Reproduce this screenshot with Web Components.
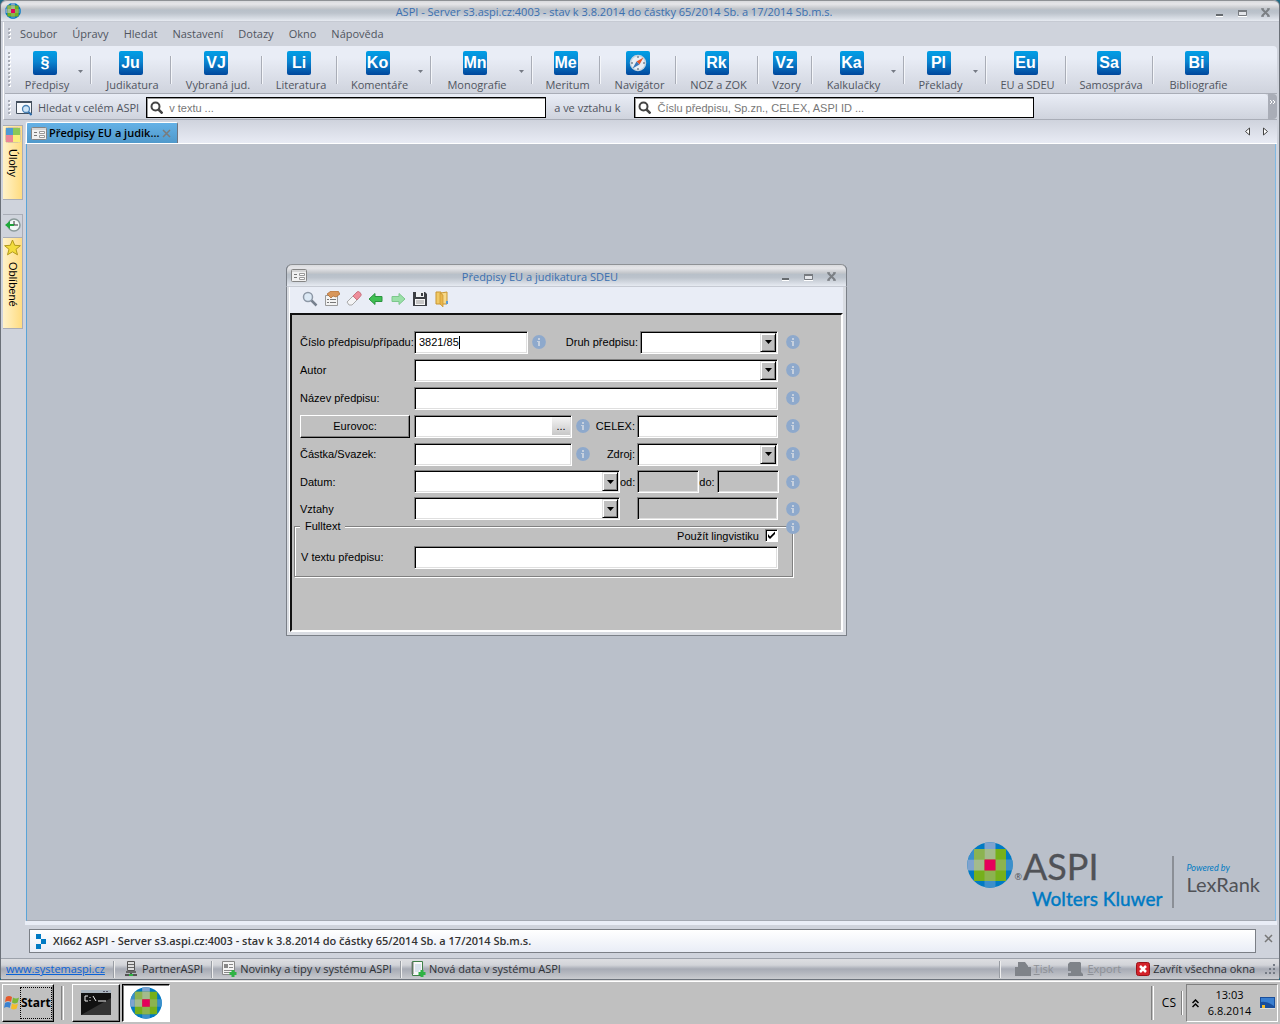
<!DOCTYPE html>
<html lang="cs">
<head>
<meta charset="utf-8">
<title>ASPI</title>
<style>
html,body{height:100%;margin:0}
body{background:#1f6b86;font:11px/14px "Open Sans","Noto Sans",sans-serif;color:#50555f;overflow:hidden}
</style>
</head>
<body>
<aspi-desktop></aspi-desktop>
<script>
const define=(name,html)=>customElements.define(name,class extends HTMLElement{
  connectedCallback(){
    if(this.shadowRoot)return;
    const t=document.createElement('template');
    t.innerHTML=typeof html==='function'?html(this):html;
    this.attachShadow({mode:'open'}).appendChild(t.content.cloneNode(true));
  }
});
const base=`:host,*{box-sizing:border-box}button{font:inherit;color:inherit;background:none;border:0;padding:0;margin:0}svg{display:block}`;

define('info-dot',`<style>:host{display:block;width:14px;height:14px;flex:none}svg{display:block}</style>
<svg width="14" height="14" viewBox="0 0 14 14"><circle cx="7" cy="7" r="6.9" fill="#8ea9cc"/><path d="M6 3h2v2H6zM5 6h3v5H6V7H5z" fill="#c6d0de"/></svg>`);

define('aspi-globe',el=>{const s=el.getAttribute('size')||16;return `<style>:host{display:block;width:${s}px;height:${s}px;flex:none}svg{display:block}</style>
<svg width="${s}" height="${s}" viewBox="0 0 46 46"><defs><clipPath id="c"><circle cx="23" cy="23" r="22.7"/></clipPath></defs>
<g clip-path="url(#c)"><path fill="#007ac3" d="M0 0h46v46H0z"/><path fill="#3c8fcb" d="M0 7h7v10.500H0zM39 17.500h7v11h-7zM17.500 39h11v7h-11z"/><path fill="#7fa3cf" d="M0 17.500h7v11H0zM17.500 0h11v7h-11z"/>
<path fill="#76b01b" d="M7 7h32v32H7z"/><path fill="#8cb350" d="M7 7h10.500v10.500H7zM28.500 17.500H39v11H28.500zM17.500 28.500h11V39h-11z"/><path fill="#a3bb8d" d="M7 17.500h10.500v11H7zM17.500 7h11v10.500h-11z"/><path fill="#e5005b" d="M17.500 17.500h11v11h-11z"/></g></svg>`});

define('form-glyph',`<style>:host{display:block;width:16px;height:13px;flex:none}svg{display:block}</style>
<svg width="16" height="13" viewBox="0 0 16 13"><rect x=".5" y=".5" width="15" height="12" rx="1" fill="#f1f1f1" stroke="#858585"/><path d="M1 1h14v2H1z" fill="#d6d6d6"/><path d="M3 5h3v1H3zM3 8h3v1H3z" fill="#777"/><path d="M8.500 4.500h5v2h-5zM8.500 8.500h5v2h-5z" fill="#fff" stroke="#999"/></svg>`);

define('window-controls',`<style>${base}:host{display:flex;gap:14px;flex:none;padding-top:2px}button{width:9px;height:9px}</style>
<button aria-label="Minimalizovat"><svg width="9" height="9"><path d="M1 6h7v2H1z" fill="#666b70"/><path d="M1 8h7v1H1z" fill="#fff"/></svg></button>
<button aria-label="Maximalizovat"><svg width="9" height="9"><path d="M.5 2.500h8v5h-8z" fill="#e4e6ea" stroke="#777b80"/><path d="M0 2h9v2H0z" fill="#777b80"/><path d="M0 8h9v1H0z" fill="#fff"/></svg></button>
<button aria-label="Zavřít"><svg width="9" height="9"><path d="M1 1l7 7M8 1L1 8" stroke="#7b7f84" stroke-width="2"/><path d="M0 .8h3M6 .8h3M0 8.200h3M6 8.200h3" stroke="#7b7f84"/></svg></button>`);

define('title-bar',`<style>:host{display:flex;align-items:center;height:22px;padding:0 9px 0 4px;box-sizing:border-box;border-top:1px solid #8e9195;border-bottom:1px solid #c6cad3;border-radius:6px 6px 0 0;color:#3a6fb0;background:linear-gradient(#d9dadd,#e6e6e9 15%,#c3c6cb 38%,#b8c0c9 45%,#bcc3cc 60%,#e6eaf1)}
b{flex:1;font-weight:400;text-align:center;white-space:nowrap;padding-right:8px;padding-top:2px}</style><slot name="icon"></slot><b><slot></slot></b><window-controls></window-controls>`);

define('grip-dots',el=>{const n=+el.getAttribute('dots');let c='';for(let i=0;i<n;i++)c+=`<path d="M1 ${i*4+1}h2v2H1z" fill="#fff"/><path d="M0 ${i*4}h2v2H0z" fill="#a9adb7"/>`;
return `<style>:host{display:block;width:3px;flex:none}svg{display:block}</style><svg width="3" height="${n*4}">${c}</svg>`});

define('menu-bar',`<style>${base}:host{display:flex;align-items:center;height:24px;padding-left:4px;background:#cfd3dc}nav{display:flex;gap:15px;padding-left:9px}</style>
<grip-dots dots="3"></grip-dots><nav><button>Soubor</button><button>Úpravy</button><button>Hledat</button><button>Nastavení</button><button>Dotazy</button><button>Okno</button><button>Nápověda</button></nav>`);

define('tool-item',el=>`<style>${base}:host{display:flex;flex:none;width:var(--w);padding-top:5px}
.go{flex:1;display:flex;flex-direction:column;align-items:center;gap:3px;white-space:nowrap;padding-left:3px}
.t{width:24px;height:24px;margin-right:4px;border-radius:2px;background:linear-gradient(#009fe6,#0a84d0 45%,#00479c);color:#fff;font:bold 16px/23px "Liberation Sans",sans-serif;text-align:center}
.m{width:12px;padding-top:19px}.s{width:2px;height:28px;margin-top:5px;background:#a9adb7;border-right:1px solid #f4f6fa}</style>
<button class="go"><span class="t">${el.hasAttribute('compass')?`<svg width="24" height="24"><circle cx="12" cy="12" r="7.500" fill="#e8eef4" stroke="#c5d3de" stroke-width="1.500"/><path d="M12 5v2M12 17v2M5 12h2M17 12h2" stroke="#456"/><path d="M17.500 6.500l-4 7-3-3z" fill="#e4572e"/><path d="M6.500 17.500l4-7 3 3z" fill="#3b78b8"/></svg>`:el.getAttribute('mark')}</span><span><slot></slot></span></button>
${el.hasAttribute('menu')?'<span class="m"><svg width="5" height="3"><path d="M0 0h5L2.500 3z" fill="#757a84"/></svg></span>':''}${el.hasAttribute('last')?'':'<span class="s"></span>'}`);

define('tool-bar',()=>{
const items=[['§','Předpisy',79,'menu'],['Ju','Judikatura',80],['VJ','Vybraná jud.',91],['Li','Literatura',75],['Ko','Komentáře',94,'menu'],['Mn','Monografie',101,'menu'],['Me','Meritum',68],['','Navigátor',76,'compass'],['Rk','NOZ a ZOK',82],['Vz','Vzory',54],['Ka','Kalkulačky',92,'menu'],['Pl','Překlady',82,'menu'],['Eu','EU a SDEU',80],['Sa','Samospráva',87],['Bi','Bibliografie',86,'last']];
return `<style>:host{display:flex;height:48px;padding-left:3px;box-sizing:border-box;border-bottom:1px solid #a9adb7;border-radius:0 4px 0 0;background:linear-gradient(#e9edf6 25%,#cfd3dd)}grip-dots{margin:6px 2px 0 0}</style><grip-dots dots="9"></grip-dots>`+
items.map(([m,l,w,f=''])=>`<tool-item mark="${m}" ${f} style="--w:${w}px">${l}</tool-item>`).join('')});

define('search-bar',`<style>${base}:host{display:flex;height:25px}
.bar{flex:1;display:flex;align-items:center;padding:2px 0 0 3px;border-radius:0 4px 4px 0;background:linear-gradient(#e9edf6,#cfd3dd)}
.ic{margin:0 6px 0 5px}.f{display:flex;align-items:center;width:400px;height:21px;border:1px solid #000;box-shadow:inset 1px 1px #999;background:#fff;padding-left:3px;gap:6px}
input{flex:1;border:0;outline:0;background:none;padding:0;font:11px/14px "Liberation Sans",sans-serif}input::placeholder{color:#777;opacity:1}
.a{margin-left:7px}.b{margin:0 14px 0 8px}.more{width:9px;background:#a9adb7;border-radius:0 4px 4px 0;color:#fff}</style>
<div class="bar"><grip-dots dots="4"></grip-dots>
<svg class="ic" width="16" height="16"><path d="M.5 1.500h15v12H.5z" fill="#f7f9fc" stroke="#44505e"/><path d="M0 1h16v2H0z" fill="#44505e"/><circle cx="10" cy="9" r="3.500" fill="#cfe5f7" stroke="#4a82b5" stroke-width="1.300"/><path d="M12.500 12l3 3" stroke="#2f6ca8" stroke-width="2"/></svg>
<label for="q">Hledat v celém ASPI</label><span class="f a"><svg width="13" height="13"><circle cx="5.500" cy="5.500" r="4" fill="none" stroke="#444" stroke-width="2"/><path d="M8.500 8.500l4 4" stroke="#444" stroke-width="2.500"/></svg><input id="q" placeholder="v textu ..."></span>
<label class="b" for="r">a ve vztahu k</label><span class="f"><svg width="13" height="13"><circle cx="5.500" cy="5.500" r="4" fill="none" stroke="#444" stroke-width="2"/><path d="M8.500 8.500l4 4" stroke="#444" stroke-width="2.500"/></svg><input id="r" placeholder="Číslu předpisu, Sp.zn., CELEX, ASPI ID ..."></span></div>
<button class="more" aria-label="Další"><svg width="9" height="25"><path d="M2 6l2 2-2 2M5 6l2 2-2 2" fill="none" stroke="#fff"/></svg></button>`);

define('side-rail',`<style>${base}:host{display:flex;flex-direction:column;width:22px;flex:none;padding-top:5px}
button{display:flex;flex-direction:column;align-items:center;width:20px;border:1px solid #a9adb7;border-left:0;padding-top:1px;gap:6px;font:11px/13px "Liberation Sans",sans-serif;color:#000;white-space:nowrap}
.y{background:linear-gradient(90deg,#fff2c9,#ffdc80)}span{writing-mode:vertical-rl}.u{height:75px}.h{height:23px;margin-top:14px;border-bottom:0;padding-top:2px}.o{height:92px}</style>
<button class="y u"><svg width="16" height="16"><rect x=".5" y=".5" width="15" height="15" rx="2" fill="#fff" stroke="#d8c9a0"/><path d="M1 1h7v7H1z" fill="#4e9ad4"/><path d="M8 1h7v7H8z" fill="#8cc857"/><path d="M1 8h7v7H1z" fill="#ea8698"/><path d="M8 8h7v7H8z" fill="#fbee7a"/></svg><span>Úlohy</span></button>
<button class="h" aria-label="Historie"><svg width="16" height="16"><circle cx="9" cy="8" r="6" fill="#f3f7f7" stroke="#8a9a9a" stroke-width="1.500"/><path d="M9 4v4h4" fill="none" stroke="#333"/><path d="M9 8H4" stroke="#1f9f3a" stroke-width="2"/><path d="M0 8l5-4v8z" fill="#1fa83a"/></svg></button>
<button class="y o"><svg width="17" height="17" viewBox="0 0 17 17"><path d="M8.500 1l2.200 5.300 5.700.4-4.400 3.600 1.500 5.500-5-3-5 3L5 10.300.6 6.700l5.700-.4z" fill="#f3dc3c" stroke="#b39a1c"/></svg><span>Oblíbené</span></button>`);

define('doc-tabs',`<style>${base}:host{display:flex;height:24px;border-bottom:1px solid #fff;background:linear-gradient(#cfd3dd,#e8ebf4);padding-right:8px;align-items:flex-end}
.tab{display:flex;align-items:center;width:152px;height:21px;margin-left:1px;padding-left:4px;gap:2px;border:1px solid #fff;border-right:1px solid #6f7580;border-bottom:0;border-radius:2px 2px 0 0;background:linear-gradient(#64b1e6,#5099cb);color:#000;font-weight:600;white-space:nowrap}
.x{margin-left:1px}.n{margin-left:auto;display:flex;gap:11px;padding-bottom:7px}</style>
<div class="tab"><form-glyph></form-glyph><span>Předpisy EU a judik...</span><button class="x" aria-label="Zavřít kartu"><svg width="9" height="9"><path d="M1 1l7 7M8 1L1 8" stroke="#7b7b7b" stroke-width="1.500"/></svg></button></div>
<div class="n"><button aria-label="Předchozí"><svg width="7" height="9"><path d="M5.500 1v7L1.500 4.500z" fill="#fff" stroke="#444"/></svg></button><button aria-label="Následující"><svg width="7" height="9"><path d="M1.500 1v7l4-3.500z" fill="#fff" stroke="#444"/></svg></button></div>`);

define('logo-mark',`<style>:host{position:absolute;right:15px;bottom:10px;display:flex;align-items:flex-start;font-family:Lato,"Open Sans",sans-serif;color:#505257;white-space:nowrap}
.w{display:flex;flex-direction:column;margin-left:-5px}.r{font:9px/14px "Open Sans",sans-serif;padding:28px 0 0 1px}.a{font-size:36px;line-height:44px;padding:2px 0 0 6px;-webkit-text-stroke:.3px #505257}.k{font-size:19px;line-height:22px;color:#007ac3;font-weight:500;padding-left:15px;-webkit-text-stroke:.3px #007ac3}
.l{align-self:flex-end;width:2px;height:52px;background:#8b8f96;margin:0 13px 2px 9px}.x{padding-top:20px}.p{font:italic 9px/12px Lato,sans-serif;color:#007ac3}.n{font-size:20px;line-height:20px}</style>
<aspi-globe size="46"></aspi-globe><span class="r">®</span><div class="w"><span class="a">ASPI</span><span class="k">Wolters Kluwer</span></div><span class="l"></span><div class="x"><div class="p">Powered by</div><div class="n">LexRank</div></div>`);

define('dialog-tools',`<style>${base}:host{display:flex;align-items:center;gap:6px;height:26px;padding:0 0 3px 12px;background:#e9edf6}</style>
<button aria-label="Hledat"><svg width="16" height="16"><circle cx="6" cy="6" r="4.500" fill="#dce9f5" stroke="#8d98a6" stroke-width="1.500"/><path d="M9.500 9.500l5 5" stroke="#77818e" stroke-width="2.500"/></svg></button>
<button aria-label="Vlastnosti"><svg width="16" height="16"><path d="M1.500 4.500h12v10h-12z" fill="#f3f3f3" stroke="#999"/><path d="M3 8h2v1H3zM6 8h6v1H6zM3 11h2v1H3zM6 11h6v1H6z" fill="#777"/><path d="M3 3l4-3h7l2 3-4 3-3-1-2 2-2-2z" fill="#d8965a" stroke="#a8642c" stroke-width=".7"/></svg></button>
<button aria-label="Vymazat"><svg width="16" height="16"><path d="M1 11l6-6 4 4-5 5H3z" fill="#f4f4f6" stroke="#aaa"/><path d="M7 5l4-4q1-1 2.500 0l1.500 2q.6 1-.4 2L11 9z" fill="#ee8d9a" stroke="#c97480"/></svg></button>
<button aria-label="Zpět"><svg width="16" height="16"><path d="M1 8l6-5.500v3h7v5H7v3z" fill="#3fbf52" stroke="#2c9440"/></svg></button>
<button aria-label="Vpřed"><svg width="16" height="16"><path d="M15 8L9 2.500v3H2v5h7v3z" fill="#9be0a8" stroke="#7cc78c"/></svg></button>
<button aria-label="Uložit"><svg width="16" height="16"><path d="M1 1h12l2 2v12H1z" fill="#3c3f44"/><path d="M4 1h8v5H4z" fill="#eef0f2"/><path d="M9 2h2v3H9z" fill="#3c3f44"/><path d="M3 8h10v6H3z" fill="#f7f7f7"/><path d="M4 10h8M4 12h8" stroke="#999"/></svg></button>
<button aria-label="Otevřít"><svg width="16" height="16"><path d="M2 1h5v12H2z" fill="#f1c964" stroke="#c89530"/><path d="M7 2l6-1v12H7z" fill="#f7d98a" stroke="#c89530"/><path d="M6 2l3 2v12l-3-3z" fill="#eab54a" stroke="#c89530" stroke-width=".7"/><path d="M12 10h2v3h-2z" fill="#5b9bd5"/></svg></button>`);

define('search-form',()=>{
const sel=(id,c)=>`<span class="sel ${c}"><select id="${id}"><option></option></select><i><svg width="7" height="4"><path d="M0 0h7L3.500 4z"/></svg></i></span>`;
return `<style>${base}:host{display:block;flex:1;padding:13px 0 0 1px;border:2px solid;border-color:#111 #fff #fff #111;background:#c0c0c0;font:11px/14px "Liberation Sans",sans-serif;color:#000}
form{display:grid;grid-template-rows:repeat(5,28px) repeat(2,27px)}
.row,.main{display:flex;align-items:center}.row{padding-left:7px}.row>label:first-child{width:114px;flex:none;white-space:nowrap}.main{width:364px;flex:none;margin-right:8px}
input:not([type=checkbox]),.sel{height:23px;border:1px solid;border-color:#808080 #fff #fff #808080;outline:0;background:#fff;box-shadow:inset 1px 1px #000,inset -1px -1px #dfdfdf;padding:0 4px;font:inherit;color:#000;min-width:0;border-radius:0}
input:disabled{background:#c0c0c0!important}
.sel{display:grid;padding:1px;grid-template:1fr/1fr}.sel select{grid-area:1/1;appearance:none;border:0;outline:0;background:none;width:100%;font:inherit;padding:0}
.sel i{grid-area:1/1;justify-self:end;width:16px;display:grid;place-items:center;pointer-events:none;background:#c0c0c0;border:1px solid;border-color:#dfdfdf #000 #000 #dfdfdf;box-shadow:inset 1px 1px #fff,inset -1px -1px #808080}
.w1,.w2,.w4,.w5,.w6,.w7{flex:none}.w1{width:114px}.w2{width:138px}.wf{flex:1}.w4{width:158px}.w5{width:141px}.w6{width:206px}.w7{width:62px}
.g{margin:0 4px}.e{flex:1;text-align:right;padding-right:2px;white-space:nowrap}
.euro{width:110px;height:23px;margin-right:4px;border:1px solid;border-color:#fff #000 #000 #fff;box-shadow:inset -1px -1px #808080;text-align:center}
.combo{display:grid;grid-template:1fr/1fr;align-items:center}.combo>*{grid-area:1/1}.combo button{justify-self:end;width:18px;height:18px;margin-right:2px;background:linear-gradient(#f4f4f4,#c8c8c8)}
.combo u{width:1px;height:13px;background:#000;margin-left:45px}
fieldset{position:relative;width:499px;height:55px;margin:0 0 0 1px;padding:0 0 0 6px;border:1px solid #808080;box-shadow:1px 1px #fff,inset 1px 1px #fff;min-width:0}
legend{padding:0 5px;margin-left:-1px;line-height:8px;background:#c0c0c0}
fieldset info-dot{position:absolute;right:-8px;top:-10px}
.chk{display:flex;justify-content:flex-end;align-items:center;gap:6px;width:477px;height:11px}
.chk input{appearance:none;margin:0;width:13px;height:13px;background:#fff;border:1px solid;border-color:#808080 #fff #fff #808080;box-shadow:inset 1px 1px #000}
.chk .box{display:grid}.chk .box>*{grid-area:1/1}.chk svg{pointer-events:none}
.ft{display:flex;align-items:center;height:32px}.ft label{width:113px}.ft input{width:364px}
</style>
<form>
<div class="row"><label for="a">Číslo předpisu/případu:</label><div class="main"><span class="combo w1"><input id="a" value="3821/85"><u></u></span><info-dot class="g"></info-dot><label class="e" for="b">Druh předpisu:</label>${sel('b','w2')}</div><info-dot></info-dot></div>
<div class="row"><label for="c">Autor</label><div class="main">${sel('c','wf')}</div><info-dot></info-dot></div>
<div class="row"><label for="d">Název předpisu:</label><div class="main"><input class="wf" id="d"></div><info-dot></info-dot></div>
<div class="row"><button class="euro" type="button">Eurovoc:</button><div class="main"><span class="combo w4"><input id="e" aria-label="Eurovoc"><button type="button">...</button></span><info-dot class="g"></info-dot><label class="e" for="f">CELEX:</label><input class="w5" id="f"></div><info-dot></info-dot></div>
<div class="row"><label for="g">Částka/Svazek:</label><div class="main"><input class="w4" id="g"><info-dot class="g"></info-dot><label class="e" for="h">Zdroj:</label>${sel('h','w5')}</div><info-dot></info-dot></div>
<div class="row"><label for="i">Datum:</label><div class="main">${sel('i','w6')}<label class="e" for="j">od:</label><input class="w7" id="j" disabled><label class="e" for="k">do:</label><input class="w7" id="k" disabled></div><info-dot></info-dot></div>
<div class="row"><label for="l">Vztahy</label><div class="main">${sel('l','w6')}<span class="e"></span><input class="w5" aria-label="Hodnota vztahu" disabled></div><info-dot></info-dot></div>
<fieldset><legend>Fulltext</legend><info-dot></info-dot>
<div class="chk"><label for="m">Použít lingvistiku</label><span class="box"><input id="m" type="checkbox" checked><svg width="13" height="13"><path d="M3 5v3l2 2 5-5V2.500L5 7.500z"/></svg></span></div>
<div class="ft"><label for="n">V textu předpisu:</label><input id="n"></div></fieldset>
</form>`});

define('mdi-window',`<style>:host{position:absolute;left:259px;top:120px;width:561px;height:372px;box-sizing:border-box;display:flex;flex-direction:column;border:1px solid #7b8088;border-top:0;border-radius:6px 6px 0 0;background:#d9dce2}
.in{flex:1;display:flex;flex-direction:column;margin:0 3px 3px 2px;border-left:1px solid #fff}title-bar{margin:0 -1px;height:23px;border-left:1px solid #7b8088;border-right:1px solid #7b8088;padding-left:4px;padding-right:10px}</style>
<title-bar><form-glyph slot="icon"></form-glyph>Předpisy EU a judikatura SDEU</title-bar><div class="in"><dialog-tools></dialog-tools><search-form></search-form></div>`);

define('message-line',`<style>${base}:host{display:flex;align-items:center;padding:4px 4px 5px 4px}
div{flex:1;display:flex;align-items:center;gap:6px;height:24px;padding-left:6px;border:1px solid #7b7f86;background:linear-gradient(#fff,#e9edf6);font-weight:600;color:#333}
button{margin:0 0 6px 8px}</style><div><svg width="11" height="15"><path d="M0 0h5v5H0zM5 5h5v5H5zM0 10h5v5H0z" fill="#007ac3"/></svg><span>XI662 ASPI - Server s3.aspi.cz:4003 - stav k 3.8.2014 do částky 65/2014 Sb. a 17/2014 Sb.m.s.</span></div><button aria-label="Zavřít"><svg width="9" height="9"><path d="M1 1l7 7M8 1L1 8" stroke="#777" stroke-width="1.500"/></svg></button>`);

define('status-bar',`<style>${base}:host{display:flex;align-items:center;height:22px;padding:0 2px 0 5px;border-top:1px solid #9da2ab;border-bottom:1px solid #6d737c;background:linear-gradient(#dddee2,#d2d4d9 30%,#a7abb5 50%,#b1b4bc 65%,#c9cbcf);color:#2e3136;white-space:nowrap}
a{color:#0b62d6}button{display:flex;align-items:center;gap:3px}.s{width:2px;height:17px;background:#999da4;border-right:1px solid #eee;margin:0 8px}.r{margin-left:auto;margin-right:14px}.d{color:#8d9096;margin-right:15px}u{text-underline-offset:1px}</style>
<a href="#">www.systemaspi.cz</a><span class="s"></span>
<button><svg width="16" height="16"><path d="M4.500.5h7v9h-7z" fill="#ddd" stroke="#555"/><path d="M5 3h6v1H5zM5 6h6v1H5z" fill="#666"/><path d="M3 10h10v2H3z" fill="#666"/><path d="M2 14h12M8 12v2" stroke="#555" stroke-width="2"/><path d="M6 13h4v2H6z" fill="#2fb244"/></svg>PartnerASPI</button><span class="s"></span>
<button><svg width="16" height="16"><path d="M1.500.5h12v13h-12z" fill="#f4f4f4" stroke="#888"/><path d="M3 3h4v4H3zM8 3h4v1H8zM8 6h4v1H8zM3 9h8v1H3zM3 11h6v1H3z" fill="#888"/><path d="M12 9v7M8.500 12.500h7" stroke="#2fb244" stroke-width="3"/></svg>Novinky a tipy v systému ASPI</button><span class="s"></span>
<button><svg width="16" height="16"><path d="M2.500.5h10v14h-10z" fill="#f8f8f8" stroke="#3f8048"/><path d="M1 2h3M1 4h3M1 6h3M1 8h3M1 10h3M1 12h3" stroke="#777"/><path d="M5 4h6M5 6h6M5 8h6M5 10h4" stroke="#b9cde0"/><path d="M12 9v7M8.500 12.500h7" stroke="#2fb244" stroke-width="3"/></svg>Nová data v systému ASPI</button>
<span class="s r"></span><button class="d" disabled><svg width="16" height="16"><path d="M3 1h7l3 4v1h3v9H0V6h3z" fill="#7f8389"/></svg><span><u>T</u>isk</span></button>
<button class="d" disabled><svg width="16" height="16"><path d="M2 1h10l1 1v9l2 2v2H0v-3h3v-2H0V3z" fill="#7f8389"/></svg><span><u>E</u>xport</span></button>
<button><svg width="14" height="14"><rect x=".5" y=".5" width="13" height="13" rx="2" fill="#d3222a" stroke="#9a1218"/><path d="M4 4l6 6M10 4l-6 6" stroke="#fff" stroke-width="2.500"/></svg>Zavřít všechna okna</button>
<svg width="22" height="14"><path d="M18 2h2v2h-2zM14 6h2v2h-2zM18 6h2v2h-2zM10 10h2v2h-2zM14 10h2v2h-2zM18 10h2v2h-2z" fill="#747a84"/></svg>`);

define('task-bar',`<style>${base}:host{display:flex;align-items:center;height:44px;flex:none;padding:1px 2px 0;border-top:1px solid #dfdfdf;box-shadow:inset 0 1px #fff;background:#c0c0c0;color:#000}
.b{display:flex;align-items:center;justify-content:center;height:38px;width:48px;border:1px solid;border-color:#fff #000 #000 #fff;box-shadow:inset -1px -1px #808080}
.st{width:52px;justify-content:flex-start;padding-left:1px}.st span{font:bold 12px/30px "Open Sans",sans-serif;border:1px dotted #000;height:32px}
.on{border-color:#000 #fff #fff #000;background:#fff;box-shadow:inset 1px 1px #808080;margin-left:2px}
.s{width:3px;height:34px;border-left:1px solid #808080;border-right:1px solid #fff}.sm{height:24px;width:2px}
.l{margin:0 8px 0 7px}.r{margin-left:auto}.cs{font:12px/14px "Open Sans",sans-serif;margin:0 5px 0 8px}
.tray{display:flex;align-items:center;width:92px;height:38px;margin-left:3px;border:1px solid;border-color:#808080 #fff #fff #808080;padding:0 2px 0 5px;justify-content:space-between}
.c{font-size:11px;line-height:16px;text-align:center;white-space:pre-line}</style>
<button class="b st"><svg width="16" height="16" viewBox="0 0 16 16"><path d="M2 2q3-2 6 0L7 7Q4 5 1 7z" fill="#e5592b"/><path d="M9 2.500q3 2 6 0l-1.300 5q-3 2-5.700 0z" fill="#7ab83a"/><path d="M1 8q3-2 6 0l-1.300 5q-3-2-5.700 0z" fill="#3b82d0"/><path d="M8 8.500q3 2 6 0l-1.300 5q-3 2-5.700 0z" fill="#f4bd2b"/></svg><span>Start</span></button>
<span class="s l"></span>
<button class="b" aria-label="Příkazový řádek"><svg width="30" height="26"><path d="M0 0h30v25H0z" fill="#111"/><path d="M0 0h30v3H0z" fill="#a9b4be"/><path d="M22 1h2v1h-2zM25 1h2v1h-2z" fill="#556"/><path d="M0 25L30 8v17z" fill="#333"/><path d="M7 6H4v5h3M9 7v1M9 10v1M12 6l3 5M17 11h8" fill="none" stroke="#eee"/></svg></button>
<button class="b on" aria-label="ASPI"><aspi-globe size="32"></aspi-globe></button>
<span class="s r"></span><span class="cs">CS</span><span class="s sm"></span>
<div class="tray"><svg width="7" height="9"><path d="M.5 4l3-3 3 3M.5 8l3-3 3 3" fill="none" stroke="#000" stroke-width="1.500"/></svg><span class="c">13:03
6.8.2014</span><svg width="15" height="13"><path d="M0 0h15v11H0z" fill="#1a4f9c"/><path d="M1 1h13v8Q8 4 1 5z" fill="#3a7fd0"/><path d="M2 8h3v4H2z" fill="#f4bd2b"/><path d="M0 11h15v1H0z" fill="#ddd"/></svg></div>`);

define('aspi-desktop',`<style>:host{display:flex;flex-direction:column;height:100vh}
.app{flex:1;display:flex;flex-direction:column;min-height:0;background:#cfd3dc;border-radius:6px 6px 4px 4px;border-left:1px solid #6b7078;border-right:1px solid #6b7078}
.body{flex:1;display:flex;min-height:0;margin:0 2px}.work{flex:1;display:flex;flex-direction:column;min-width:0}
.canvas{flex:1;position:relative;min-height:0;background:#bac0ca;border-left:1px solid #5aa4d8;border-right:1px solid #7fb9e4;border-bottom:1px solid #a4a9b2;margin:0 1px}
.edge{height:4px;background:#e9edf6;flex:none}.top{margin:0 2px;border-left:1px solid #fff;border-bottom:1px solid #a9adb7}tool-bar,search-bar{margin-left:1px}</style>
<div class="app"><title-bar><aspi-globe slot="icon"></aspi-globe>ASPI - Server s3.aspi.cz:4003 - stav k 3.8.2014 do částky 65/2014 Sb. a 17/2014 Sb.m.s.</title-bar>
<div class="top"><menu-bar></menu-bar><tool-bar></tool-bar><search-bar></search-bar></div>
<div class="body"><side-rail></side-rail><div class="work"><doc-tabs></doc-tabs><div class="canvas"><mdi-window></mdi-window><logo-mark></logo-mark></div><div class="edge"></div><message-line></message-line></div></div>
<status-bar></status-bar></div>
<task-bar></task-bar>`);
</script>
</body>
</html>
